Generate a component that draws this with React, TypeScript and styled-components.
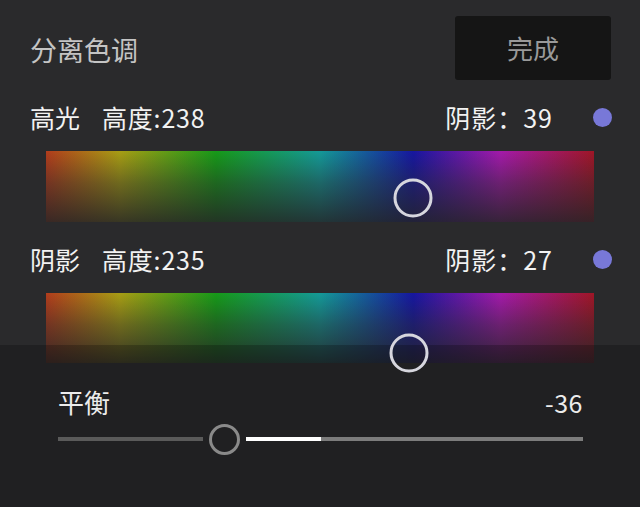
import React from "react";
import styled, { createGlobalStyle } from "styled-components";

const GlobalStyle = createGlobalStyle`
  html, body {
    margin: 0;
    padding: 0;
    background: #212121;
  }
  body {
    font-family: "Noto Sans CJK SC", "Noto Sans", sans-serif;
  }
`;

const BAR_WIDTH = 548;

const Screen = styled.div`
  width: 640px;
  height: 507px;
  display: flex;
  flex-direction: column;
  overflow: hidden;
  background: #2a2a2c;
`;

const Upper = styled.div`
  padding: 16px 28px 0 30px;
  display: flex;
  flex-direction: column;
`;

const Header = styled.div`
  display: flex;
  align-items: center;
  justify-content: space-between;
  height: 64px;
`;

const Title = styled.div`
  font-size: 27px;
  line-height: 1;
  color: #c4c4c4;
  margin-top: 2px;
`;

const DoneButton = styled.button`
  width: 156px;
  height: 64px;
  margin-right: 1px;
  border: none;
  border-radius: 3px;
  background: #151515;
  color: #9a9a9a;
  font-family: inherit;
  font-size: 26px;
  line-height: 1;
  padding: 0;
`;

const Row = styled.div`
  display: flex;
  align-items: center;
  height: 30px;
  margin-top: 22px;
  font-size: 25px;
  line-height: 1;
  color: #f2f2f2;
`;

const LeftGroup = styled.div`
  display: flex;
  align-items: center;
  gap: 22px;
`;

const Num = styled.span`
  letter-spacing: 0.8px;
`;

const RightGroup = styled.div`
  margin-left: auto;
  display: flex;
  align-items: center;
  gap: 40px;
  letter-spacing: 1px;
`;

const Dot = styled.span`
  width: 19px;
  height: 19px;
  border-radius: 50%;
  background: #7878d8;
`;

const HueBar = styled.div<{ $height: number }>`
  position: relative;
  margin: 19px 18px 0 16px;
  height: ${({ $height }) => $height}px;
  background: linear-gradient(
    to right,
    #b23c1c 0%,
    #a89e14 13.5%,
    #169a18 31%,
    #149a98 50%,
    #1616a0 67%,
    #a41aaa 83%,
    #a01626 100%
  );

  &::after {
    content: "";
    position: absolute;
    inset: 0;
    background: linear-gradient(
      to bottom,
      rgba(42, 42, 44, 0) 0%,
      rgba(40, 40, 42, 0.45) 45%,
      rgba(36, 36, 38, 0.85) 100%
    );
  }
`;

const HueThumb = styled.span`
  position: absolute;
  z-index: 2;
  width: 39px;
  height: 39px;
  box-sizing: border-box;
  border: 3px solid #d6d6de;
  border-radius: 50%;
  transform: translate(-50%, -50%);
`;

const Sheet = styled.div`
  position: relative;
  flex: 1;
  margin-top: -18px;
  padding: 42px 57px 0 58px;
  background: rgba(0, 0, 0, 0.22);
`;

const BalanceHead = styled.div`
  display: flex;
  align-items: center;
  justify-content: space-between;
  height: 30px;
  color: #ececec;
  line-height: 1;
`;

const BalanceLabel = styled.span`
  font-size: 26px;
`;

const BalanceValue = styled.span`
  font-size: 25px;
  letter-spacing: 0.5px;
`;

const Slider = styled.div`
  margin-top: 6px;
  height: 32px;
  display: flex;
  align-items: center;
`;

const Track = styled.span<{ $tone: "dim" | "fill" | "rest" }>`
  height: 4px;
  flex: none;
  background: ${({ $tone }) =>
    $tone === "fill" ? "#ffffff" : $tone === "dim" ? "#5a5a5a" : "#7c7c7c"};
`;

const Knob = styled.span`
  flex: none;
  width: 31px;
  height: 31px;
  margin: 0 6px;
  box-sizing: border-box;
  border: 3px solid #8a8a8a;
  border-radius: 50%;
`;

interface ToneProps {
  label: string;
  hue: number;
  sat: number;
}

const ToneRow: React.FC<ToneProps> = ({ label, hue, sat }) => (
  <Row>
    <LeftGroup>
      <span>{label}</span>
      <Num>高度:{hue}</Num>
    </LeftGroup>
    <RightGroup>
      <span>阴影：{sat}</span>
      <Dot />
    </RightGroup>
  </Row>
);

const HuePicker: React.FC<{ hue: number; sat: number; height: number }> = ({
  hue,
  sat,
  height,
}) => {
  const x = (hue / 355) * BAR_WIDTH;
  const y = 88 - 1.04 * sat;
  return (
    <HueBar $height={height}>
      <HueThumb style={{ left: x, top: y }} />
    </HueBar>
  );
};

const BalanceSlider: React.FC<{ value: number }> = ({ value }) => {
  const width = 525;
  const knob = 31 + 12;
  const center = ((value + 100) / 200) * width - 1.5;
  const mid = width / 2;
  const left = center - knob / 2;
  const fill = Math.max(mid - (center + knob / 2), 0);
  const rest = width - left - knob - fill;
  return (
    <Slider>
      <Track $tone="dim" style={{ width: left }} />
      <Knob />
      <Track $tone="fill" style={{ width: fill }} />
      <Track $tone="rest" style={{ width: rest }} />
    </Slider>
  );
};

export default function App() {
  return (
    <>
      <GlobalStyle />
      <Screen>
        <Upper>
          <Header>
            <Title>分离色调</Title>
            <DoneButton>完成</DoneButton>
          </Header>
          <ToneRow label="高光" hue={238} sat={39} />
          <HuePicker hue={238} sat={39} height={71} />
          <ToneRow label="阴影" hue={235} sat={27} />
          <HuePicker hue={235} sat={27} height={70} />
        </Upper>
        <Sheet>
          <BalanceHead>
            <BalanceLabel>平衡</BalanceLabel>
            <BalanceValue>-36</BalanceValue>
          </BalanceHead>
          <BalanceSlider value={-36} />
        </Sheet>
      </Screen>
    </>
  );
}
